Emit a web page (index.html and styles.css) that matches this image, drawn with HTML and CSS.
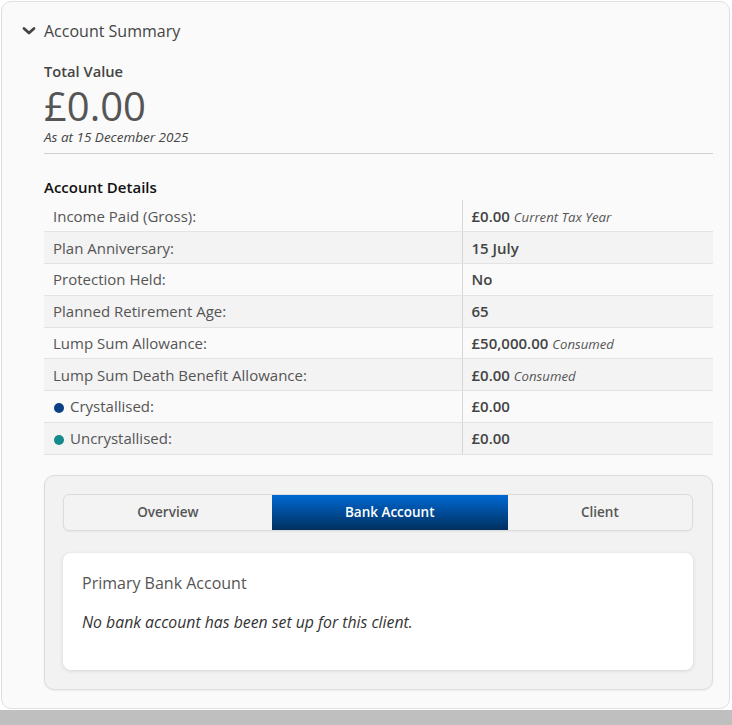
FILE: index.html
```html
<!DOCTYPE html>
<html lang="en">

<head>
    <meta charset="UTF-8">
    <meta name="viewport" content="width=device-width, initial-scale=1.0">
    <title>Account Summary</title>
    <link rel="stylesheet" href="styles.css">
</head>

<body>
    <div class="page">
        <div class="panel">
            <div class="panel-header">
                <svg class="chevron" width="14" height="10" viewBox="0 0 14 10">
                    <path d="M2 2.5 L7 7 L12 2.5" fill="none" stroke="#444" stroke-width="2.8" stroke-linecap="round" stroke-linejoin="round"/>
                </svg>
                <span>Account Summary</span>
            </div>

            <div class="panel-body">
                <div class="total">
                    <div class="total-label">Total Value</div>
                    <div class="total-value">£0.00</div>
                    <div class="total-date">As at 15 December 2025</div>
                </div>

                <h3 class="section-title">Account Details</h3>
                <table class="details">
                    <tr>
                        <td>Income Paid (Gross):</td>
                        <td><b>£0.00</b> <i>Current Tax Year</i></td>
                    </tr>
                    <tr>
                        <td>Plan Anniversary:</td>
                        <td><b>15 July</b></td>
                    </tr>
                    <tr>
                        <td>Protection Held:</td>
                        <td><b>No</b></td>
                    </tr>
                    <tr>
                        <td>Planned Retirement Age:</td>
                        <td><b>65</b></td>
                    </tr>
                    <tr>
                        <td>Lump Sum Allowance:</td>
                        <td><b>£50,000.00</b> <i>Consumed</i></td>
                    </tr>
                    <tr>
                        <td>Lump Sum Death Benefit Allowance:</td>
                        <td><b>£0.00</b> <i>Consumed</i></td>
                    </tr>
                    <tr>
                        <td><span class="dot dot-crystallised"></span>Crystallised:</td>
                        <td><b>£0.00</b></td>
                    </tr>
                    <tr>
                        <td><span class="dot dot-uncrystallised"></span>Uncrystallised:</td>
                        <td><b>£0.00</b></td>
                    </tr>
                </table>

                <div class="tab-box">
                    <div class="tabs">
                        <div class="tab">Overview</div>
                        <div class="tab active">Bank Account</div>
                        <div class="tab">Client</div>
                    </div>
                    <div class="tab-card">
                        <h4>Primary Bank Account</h4>
                        <p>No bank account has been set up for this client.</p>
                    </div>
                </div>
            </div>
        </div>
    </div>
</body>

</html>
```

FILE: styles.css
```css
* {
    margin: 0;
    padding: 0;
    box-sizing: border-box;
    font-family: 'Open Sans', 'Noto Sans', sans-serif;
}

body {
    background-color: #bfbfbf;
    color: #444;
}

.page {
    background-color: #fff;
    height: 710px;
    padding: 1px 2px 0 1px;
}

.panel {
    height: 708px;
    background-color: #fafafa;
    border: 1px solid #e0e0e0;
    border-radius: 10px;
}

.panel-header {
    display: flex;
    align-items: center;
    gap: 8px;
    padding: 10px 0 0 20px;
    height: 48px;
    font-size: 16px;
    color: #444;
}

.chevron {
    display: block;
}

.panel-body {
    padding: 11px 16px 0 42px;
}

.total-label {
    font-size: 14.7px;
    font-weight: 600;
    color: #444;
    line-height: 20px;
}

.total-value {
    margin-top: 3px;
    font-size: 40px;
    font-weight: 400;
    color: #555;
    line-height: 44px;
}

.total-date {
    margin-top: 1px;
    font-size: 13.5px;
    font-style: italic;
    color: #444;
    line-height: 16px;
    padding-bottom: 8px;
    border-bottom: 1px solid #cfcfcf;
}

.section-title {
    margin-top: 23px;
    font-size: 15px;
    font-weight: 600;
    color: #111;
    line-height: 20px;
}

.details {
    width: 100%;
    border-collapse: collapse;
    margin-top: 3px;
    font-size: 15px;
}

.details td {
    height: 31.75px;
    padding: 0 9px;
    border-bottom: 1px solid #e3e3e3;
    color: #555;
    vertical-align: middle;
}

.details td:first-child {
    width: 418px;
}

.details td:last-child {
    border-left: 1px solid #d6d6d6;
    padding-left: 9px;
}

.details tr:nth-child(even) td {
    background-color: #f3f3f3;
}

.details b {
    font-weight: 600;
    color: #444;
}

.details i {
    font-size: 13.2px;
    color: #555;
}

.dot {
    display: inline-block;
    width: 10px;
    height: 10px;
    border-radius: 50%;
    margin: 0 6px 0 1px;
    vertical-align: -1px;
}

.dot-crystallised {
    background-color: #0b3f86;
}

.dot-uncrystallised {
    background-color: #138a8c;
}

.tab-box {
    margin-top: 20px;
    background-color: #f2f2f2;
    border: 1px solid #dcdcdc;
    border-radius: 10px;
    padding: 18px 19px 19px 18px;
    box-shadow: 0 1px 2px rgba(0, 0, 0, 0.06);
}

.tabs {
    display: flex;
    height: 37px;
    border: 1px solid #dcdcdc;
    border-radius: 6px;
    overflow: hidden;
    background-color: #f3f3f3;
    box-shadow: 0 1px 2px rgba(0, 0, 0, 0.05);
}

.tab {
    flex: auto;
    display: flex;
    align-items: center;
    justify-content: center;
    font-size: 13.5px;
    font-weight: 600;
    color: #555;
}

.tab.active {
    background: linear-gradient(to bottom, #0068d2, #00305f);
    color: #fff;
}

.tab-card {
    margin-top: 22px;
    background-color: #fff;
    border-radius: 8px;
    padding: 18px 19px 37px;
    box-shadow: 0 1px 4px rgba(0, 0, 0, 0.12);
}

.tab-card h4 {
    font-size: 16px;
    font-weight: 400;
    color: #555;
    line-height: 24px;
}

.tab-card p {
    margin-top: 16px;
    font-size: 15.8px;
    font-style: italic;
    color: #333;
    line-height: 22px;
}
```
